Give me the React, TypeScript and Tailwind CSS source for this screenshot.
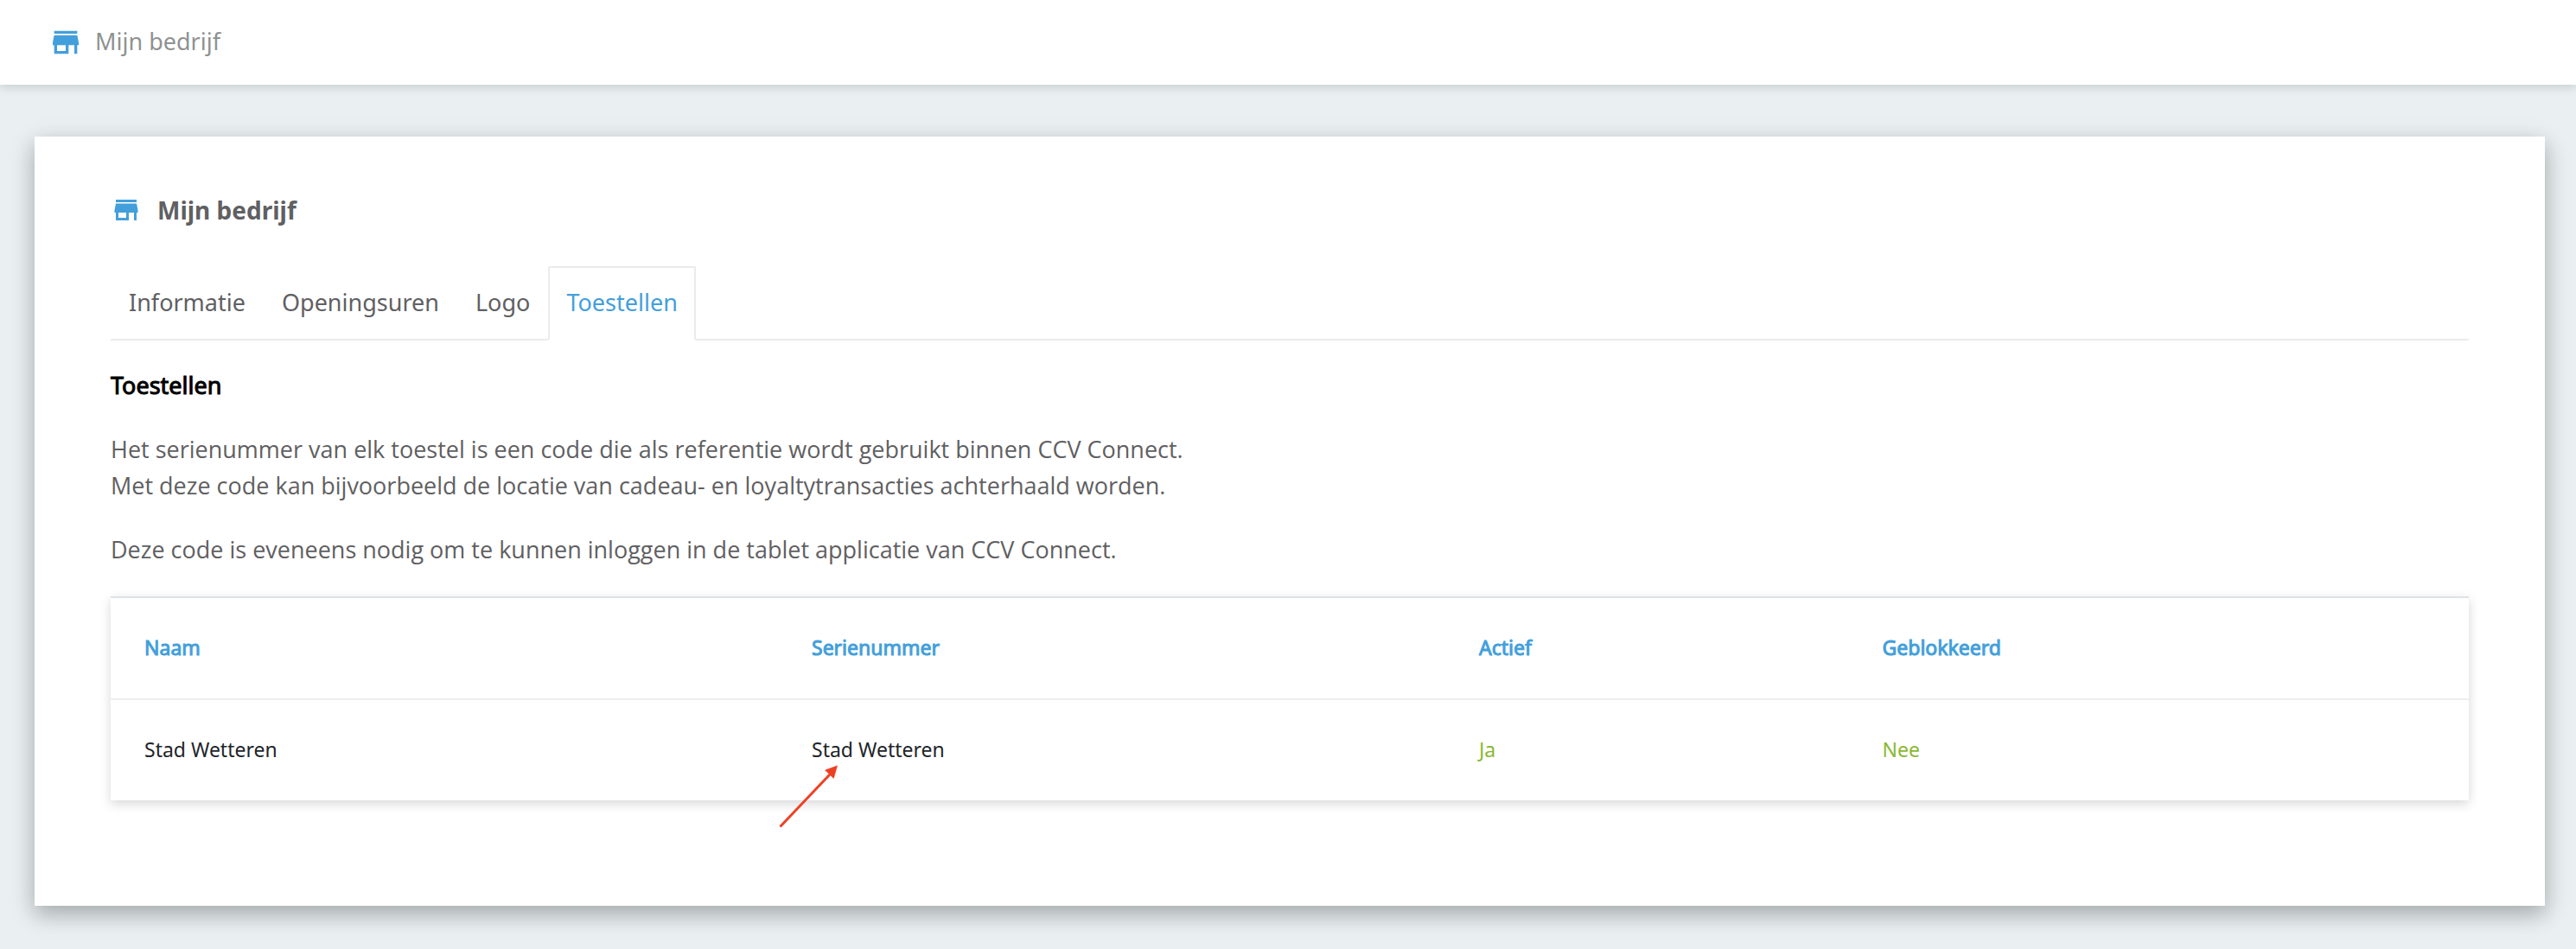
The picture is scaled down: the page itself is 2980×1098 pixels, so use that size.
import { useState } from "react";
import { MdStore } from "react-icons/md";

const tabs = ["Informatie", "Openingsuren", "Logo", "Toestellen"];

const devices = [
  { name: "Stad Wetteren", serial: "Stad Wetteren", active: "Ja", blocked: "Nee" },
];

function PointerArrow() {
  return (
    <svg
      aria-hidden="true"
      className="pointer-events-none absolute top-[75px] -left-[2px] h-[74px] w-[72px] text-[#ee4023]"
      viewBox="0 0 72 74"
    >
      <path d="M4.5 71.5 62 11" fill="none" stroke="currentColor" strokeWidth="3" />
      <path d="M71 0.5 56 6 61 10.500 66.500 16Z" fill="currentColor" />
    </svg>
  );
}

export default function App() {
  const [active, setActive] = useState("Toestellen");

  return (
    <div className="flex min-h-screen flex-col bg-[#eaf0f2] font-['Noto_Sans',sans-serif] text-[27px] leading-[42px] text-[#5f6062]">
      <header className="flex h-[98px] items-center gap-[14px] bg-white px-14 text-[#8f9291] shadow-[0_4px_10px_rgba(0,0,0,0.13)]">
        <MdStore className="size-10 text-[#439fdb]" />
        <span className="pb-0.5">Mijn bedrijf</span>
      </header>

      <main className="mx-9 mt-[60px] ml-10 bg-white px-[88px] pt-16 pb-[122px] shadow-[0_10px_22px_rgba(0,0,0,0.18),0_8px_30px_rgba(0,0,0,0.15)]">
        <h1 className="flex items-center gap-[18px] text-[28px] font-bold">
          <MdStore className="size-9 text-[#439fdb]" />
          Mijn bedrijf
        </h1>

        <div role="tablist" className="mt-11 flex border-b-2 border-[#ebebeb]">
          {tabs.map((tab) => (
            <button
              key={tab}
              type="button"
              role="tab"
              aria-selected={tab === active}
              onClick={() => setActive(tab)}
              className={
                tab === active
                  ? "-mb-[2px] h-[86px] rounded-t-[2px] border-2 border-[#ebebeb] border-b-white bg-white px-[19px] pb-0.5 text-[#439fdb]"
                  : "h-[84px] border-2 border-transparent px-[19px]"
              }
            >
              {tab}
            </button>
          ))}
        </div>

        <h2 className="mt-[31px] text-black [-webkit-text-stroke:1px]">Toestellen</h2>
        <div className="mt-8 mb-[33px] space-y-8 font-['Open_Sans',sans-serif]">
          <p>
            Het serienummer van elk toestel is een code die als referentie wordt gebruikt binnen CCV Connect.
            <br />
            Met deze code kan bijvoorbeeld de locatie van cadeau- en loyaltytransacties achterhaald worden.
          </p>
          <p>Deze code is eveneens nodig om te kunnen inloggen in de tablet applicatie van CCV Connect.</p>
        </div>

        <table className="w-full table-fixed text-left text-[23px] leading-9 shadow-[0_4px_12px_rgba(0,0,0,0.16)]">
          <thead>
            <tr className="h-[118px] border-t-2 border-b-2 border-t-[#dee2e6] border-b-[#eeeeee] text-[#439fdb] [-webkit-text-stroke:1px] [&>th]:px-[39px] [&>th]:pb-0.5 [&>th]:font-normal">
              <th scope="col" className="w-[28.300%]">Naam</th>
              <th scope="col" className="w-[28.300%]">Serienummer</th>
              <th scope="col" className="w-[17.100%]">Actief</th>
              <th scope="col">Geblokkeerd</th>
            </tr>
          </thead>
          <tbody>
            {devices.map((device) => (
              <tr key={device.name} className="h-[117px] text-[#212529] [&>td]:px-[39px] [&>td]:pb-0.5">
                <td>{device.name}</td>
                <td className="relative">
                  {device.serial}
                  <PointerArrow />
                </td>
                <td className="text-[#8ab833]">{device.active}</td>
                <td className="text-[#8ab833]">{device.blocked}</td>
              </tr>
            ))}
          </tbody>
        </table>
      </main>
    </div>
  );
}
